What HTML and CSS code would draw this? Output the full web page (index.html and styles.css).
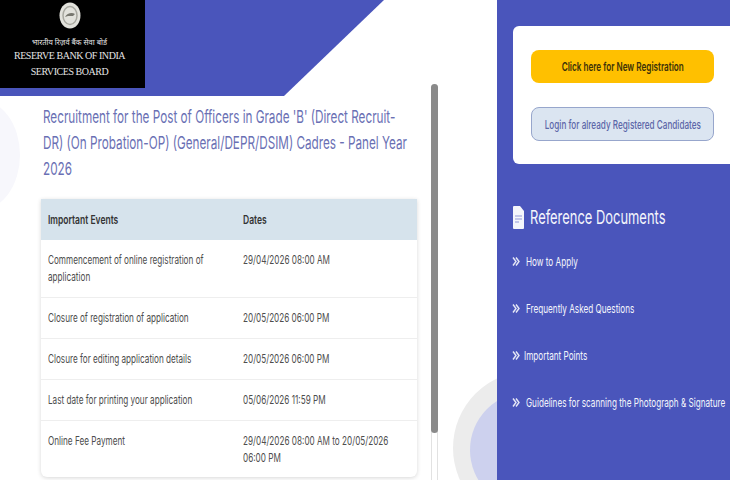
FILE: index.html
```html
<!DOCTYPE html>
<html lang="en">
<head>
    <meta charset="UTF-8">
    <title>Reserve Bank of India Services Board</title>
    <link rel="stylesheet" href="styles.css">
</head>
<body>
    <div class="page">
        <div class="main">
            <div class="decor-left"></div>
            <div class="decor-outer"></div>
            <div class="decor-inner"></div>
            <header class="banner">
                <div class="logo">
                    <svg class="seal" width="22" height="27" viewBox="0 0 22 27">
                        <ellipse cx="11" cy="13.5" rx="10.5" ry="13" fill="#e2e2dc"/>
                        <ellipse cx="11" cy="13.5" rx="7" ry="9" fill="none" stroke="#a8a8a0" stroke-width="1.5"/>
                        <path d="M6 15c2-4 7-5 10-3l-2 2h-5z" fill="#77776f"/>
                    </svg>
                    <div class="logo-hindi">भारतीय रिज़र्व बैंक सेवा बोर्ड</div>
                    <div class="logo-name">RESERVE BANK OF INDIA</div>
                    <div class="logo-name">SERVICES BOARD</div>
                </div>
            </header>
            <div class="scrollbar"><div class="thumb"></div></div>
            <section class="content">
                <h1>Recruitment for the Post of Officers in Grade 'B' (Direct Recruit-DR) (On Probation-OP) (General/DEPR/DSIM) Cadres - Panel Year 2026</h1>
                <div class="events">
                    <div class="row head"><div>Important Events</div><div>Dates</div></div>
                    <div class="row"><div>Commencement of online registration of application</div><div>29/04/2026 08:00 AM</div></div>
                    <div class="row"><div>Closure of registration of application</div><div>20/05/2026 06:00 PM</div></div>
                    <div class="row"><div>Closure for editing application details</div><div>20/05/2026 06:00 PM</div></div>
                    <div class="row"><div>Last date for printing your application</div><div>05/06/2026 11:59 PM</div></div>
                    <div class="row"><div>Online Fee Payment</div><div>29/04/2026 08:00 AM to 20/05/2026 06:00 PM</div></div>
                </div>
            </section>
        </div>
        <aside class="sidebar">
            <div class="actions">
                <a class="button new"><span>Click here for New Registration</span></a>
                <a class="button login"><span>Login for already Registered Candidates</span></a>
            </div>
            <h2>
                <svg width="11" height="23" viewBox="0 0 11 23">
                    <path d="M1 0h6l4 5v17a1 1 0 0 1-1 1H1a1 1 0 0 1-1-1V1a1 1 0 0 1 1-1z" fill="#f4f5fb"/>
                    <path d="M2 10h7M2 13h7M2 16h4" stroke="#8f97d6" stroke-width="1"/>
                </svg>
                <span>Reference Documents</span>
            </h2>
            <ul class="docs">
                <li>
                    <svg class="chev" width="8" height="9" viewBox="0 0 8 9"><path d="M1 .5l3 4-3 4M4 .5l3 4-3 4" fill="none" stroke="#e6e8f6" stroke-width="1.4"/></svg>
                    <a>How to Apply</a>
                </li>
                <li>
                    <svg class="chev" width="8" height="9" viewBox="0 0 8 9"><path d="M1 .5l3 4-3 4M4 .5l3 4-3 4" fill="none" stroke="#e6e8f6" stroke-width="1.4"/></svg>
                    <a>Frequently Asked Questions</a>
                </li>
                <li class="tight">
                    <svg class="chev" width="8" height="9" viewBox="0 0 8 9"><path d="M1 .5l3 4-3 4M4 .5l3 4-3 4" fill="none" stroke="#e6e8f6" stroke-width="1.4"/></svg>
                    <a>Important Points</a>
                </li>
                <li>
                    <svg class="chev" width="8" height="9" viewBox="0 0 8 9"><path d="M1 .5l3 4-3 4M4 .5l3 4-3 4" fill="none" stroke="#e6e8f6" stroke-width="1.4"/></svg>
                    <a>Guidelines for scanning the Photograph &amp; Signature</a>
                </li>
            </ul>
        </aside>
    </div>
</body>
</html>
```

FILE: styles.css
```css
/* the reference text is squeezed horizontally, so text blocks get this scaleX */
:root {
    --squeeze: 0.68;
}

html, body {
    margin: 0;
    padding: 0;
}

body {
    font-family: Inter, Roboto, "Liberation Sans", sans-serif;
    background-color: #ffffff;
}

.page {
    display: flex;
    width: 730px;
    height: 480px;
    overflow: hidden;
}

.main {
    position: relative;
    width: 497px;
    flex: none;
    overflow: hidden;
}

.banner {
    position: relative;
    height: 96px;
}

.banner::before {
    content: "";
    position: absolute;
    inset: 0;
    background-color: #4a55bb;
    clip-path: polygon(0 0, 384px 0, 284px 96px, 0 96px);
}

.logo {
    position: relative;
    box-sizing: border-box;
    width: 145px;
    height: 88px;
    padding-top: 2px;
    padding-right: 6px;
    background-color: #000000;
    color: #e4e4e4;
    text-align: center;
    font-family: "Liberation Serif", serif;
    font-size: 10px;
    line-height: 16px;
    letter-spacing: -0.45px;
}

.seal {
    display: block;
    margin: 0 auto;
}

.logo-hindi {
    font-family: "Noto Sans", "DejaVu Sans", sans-serif;
    font-size: 7.5px;
    line-height: 12px;
    letter-spacing: 0;
    margin-top: 7px;
}

.logo-name {
    white-space: nowrap;
}

.decor-left {
    position: absolute;
    left: -60px;
    top: 100px;
    width: 80px;
    height: 110px;
    border-radius: 50%;
    background-color: #f7f7fc;
}

.decor-outer {
    position: absolute;
    left: 453px;
    top: 371px;
    width: 154px;
    height: 154px;
    border-radius: 50%;
    background-color: #ececec;
}

.decor-inner {
    position: absolute;
    left: 470px;
    top: 392px;
    width: 116px;
    height: 116px;
    border-radius: 50%;
    background-color: #cdd1ee;
}

.scrollbar {
    position: absolute;
    left: 431px;
    top: 84px;
    width: 7px;
    height: 396px;
    background-color: #ffffff;
    box-shadow: inset 1px 0 #e2e2e2, inset -1px 0 #e2e2e2;
    border-radius: 4px 4px 0 0;
}

.thumb {
    height: 349px;
    border-radius: 4px;
    background-color: #8a8a8a;
}

.content {
    position: relative;
    padding-left: 41px;
    width: 376px;
}

h1 {
    width: 548px;
    margin: 8px 0 17px 2px;
    color: #6a70b4;
    font-size: 17.5px;
    font-weight: 400;
    line-height: 26px;
    transform: scaleX(0.67);
    transform-origin: 0 0;
}

.events {
    border-radius: 0 0 6px 6px;
    box-shadow: 0 1px 4px rgba(0, 0, 0, 0.16);
    background-color: #ffffff;
}

.row {
    display: grid;
    grid-template-columns: 195px 1fr;
    padding: 12px 7px 11px;
    border-bottom: 1px solid #eeeeee;
    color: #4d4d4d;
    font-size: 11.5px;
    line-height: 17px;
}

.row:last-child {
    border-bottom: none;
    padding-bottom: 10px;
}

.row > div {
    transform: scaleX(0.71);
    transform-origin: 0 0;
    width: 141%;
}

.row.head {
    padding: 12px 7px;
    border-bottom: none;
    background-color: #d6e3ec;
    color: #333333;
    font-size: 12px;
    font-weight: 600;
}

.sidebar {
    position: relative;
    width: 233px;
    flex: none;
    padding-top: 26px;
    background-color: #4a55bb;
    color: #f4f5fb;
}

.actions {
    display: flex;
    flex-direction: column;
    gap: 24px;
    margin-left: 16px;
    padding: 24px 16px 23px 18px;
    background-color: #ffffff;
    border-radius: 6px 0 0 6px;
}

.button {
    box-sizing: border-box;
    display: flex;
    justify-content: center;
    align-items: center;
    height: 33px;
    font-size: 12px;
    font-weight: 500;
    border-radius: 8px;
}

.button span {
    flex: none;
    white-space: nowrap;
    transform: scaleX(var(--squeeze));
}

.new {
    background-color: #ffc000;
    color: #3d3208;
    font-weight: 600;
}

.login {
    height: 34px;
    background-color: #dbe5f1;
    border: 1px solid #97a6cc;
    color: #5b66a8;
}

h2 {
    display: flex;
    align-items: center;
    gap: 6px;
    margin: 42px 0 0 16px;
    font-size: 19px;
    font-weight: 400;
    line-height: 23px;
    white-space: nowrap;
}

h2 span {
    transform: scaleX(var(--squeeze));
    transform-origin: 0 0;
}

.docs {
    list-style: none;
    margin: 9px 0 0 15px;
    padding: 0;
    font-size: 12px;
}

.docs li {
    display: flex;
    align-items: center;
    gap: 6px;
    height: 47px;
    white-space: nowrap;
}

.docs li.tight {
    gap: 4px;
}

.docs a {
    transform: scaleX(var(--squeeze));
    transform-origin: 0 0;
}

.chev {
    flex: none;
}
```
